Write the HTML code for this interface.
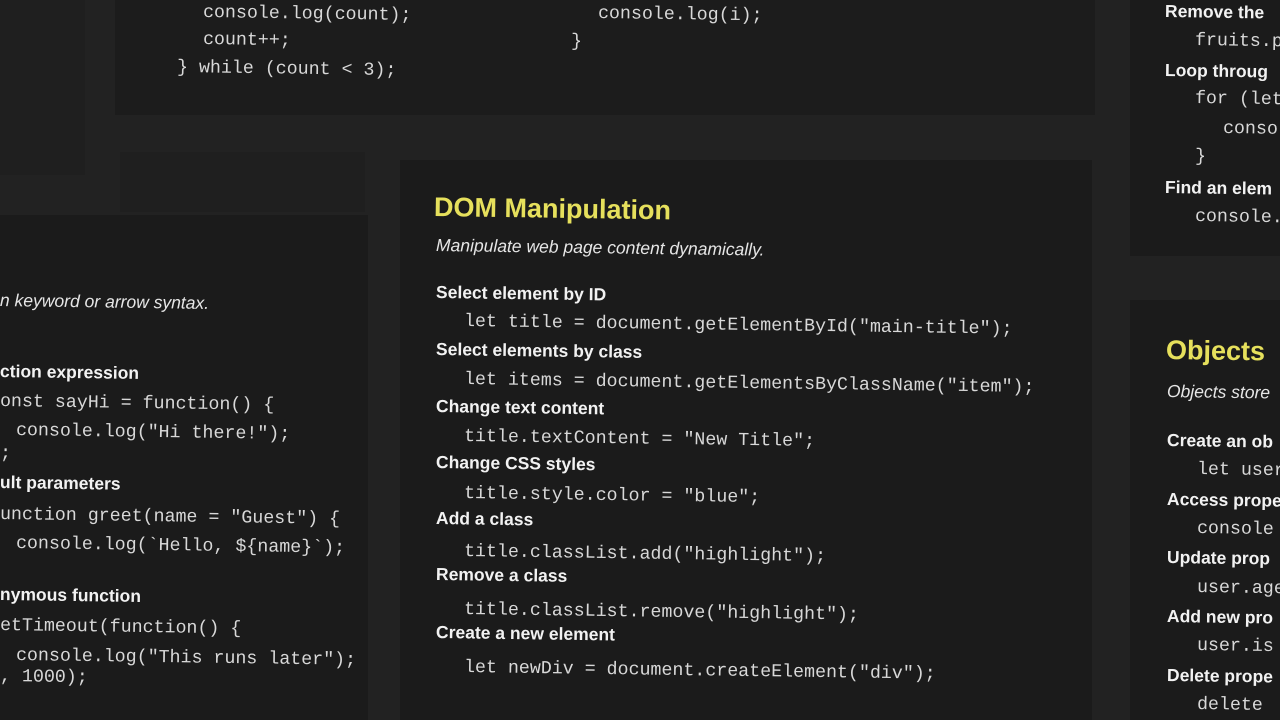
<!DOCTYPE html>
<html><head><meta charset="utf-8"><style>
html,body{margin:0;padding:0;width:1280px;height:720px;overflow:hidden;background:#222222;}
.p{position:absolute;background:#1b1b1b;}
.t{position:absolute;white-space:pre;line-height:1;transform:rotate(0.8deg);transform-origin:0 50%;}
.m{font-family:"Liberation Mono",monospace;font-size:18.3px;color:#d8d8d8;}
.h{font-family:"Liberation Sans",sans-serif;font-weight:bold;font-size:17.5px;color:#f2f2f2;}
.i{font-family:"Liberation Sans",sans-serif;font-style:italic;font-size:17.5px;color:#e6e6e6;}
.y{font-family:"Liberation Sans",sans-serif;font-weight:bold;font-size:27px;color:#e6e05c;}
</style></head><body>
<div class="p" style="left:115px;top:0;width:980px;height:115px;background:#1c1c1c"></div>
<div class="p" style="left:0;top:0;width:85px;height:175px;background:#1f1f1f"></div>
<div class="p" style="left:120px;top:152px;width:245px;height:60px;background:#1f1f1f"></div>
<div class="p" style="left:0;top:215px;width:368px;height:505px"></div>
<div class="p" style="left:400px;top:160px;width:692px;height:560px"></div>
<div class="p" style="left:1130px;top:0;width:150px;height:256px"></div>
<div class="p" style="left:1130px;top:300px;width:150px;height:420px"></div>

<div class="t m" style="left:203px;top:4px">console.log(count);</div>
<div class="t m" style="left:203px;top:31px">count++;</div>
<div class="t m" style="left:177px;top:59px">} while (count &lt; 3);</div>
<div class="t m" style="left:598px;top:5px">console.log(i);</div>
<div class="t m" style="left:571px;top:33px">}</div>

<div class="t i" style="left:0;top:292px">n keyword or arrow syntax.</div>
<div class="t h" style="left:0;top:363px">ction expression</div>
<div class="t m" style="left:0;top:393px">onst sayHi = function() {</div>
<div class="t m" style="left:16px;top:422px">console.log("Hi there!");</div>
<div class="t m" style="left:0;top:445px">;</div>
<div class="t h" style="left:0;top:474px">ult parameters</div>
<div class="t m" style="left:0;top:506px">unction greet(name = "Guest") {</div>
<div class="t m" style="left:16px;top:535px">console.log(`Hello, ${name}`);</div>
<div class="t h" style="left:0;top:586px">nymous function</div>
<div class="t m" style="left:0;top:617px">etTimeout(function() {</div>
<div class="t m" style="left:16px;top:647px">console.log("This runs later");</div>
<div class="t m" style="left:0;top:668px">, 1000);</div>

<div class="t y" style="left:434px;top:194px">DOM Manipulation</div>
<div class="t i" style="left:436px;top:237px">Manipulate web page content dynamically.</div>
<div class="t h" style="left:436px;top:284px">Select element by ID</div>
<div class="t m" style="left:464px;top:313px">let title = document.getElementById("main-title");</div>
<div class="t h" style="left:436px;top:341px">Select elements by class</div>
<div class="t m" style="left:464px;top:371px">let items = document.getElementsByClassName("item");</div>
<div class="t h" style="left:436px;top:398px">Change text content</div>
<div class="t m" style="left:464px;top:428px">title.textContent = "New Title";</div>
<div class="t h" style="left:436px;top:454px">Change CSS styles</div>
<div class="t m" style="left:464px;top:485px">title.style.color = "blue";</div>
<div class="t h" style="left:436px;top:510px">Add a class</div>
<div class="t m" style="left:464px;top:543px">title.classList.add("highlight");</div>
<div class="t h" style="left:436px;top:566px">Remove a class</div>
<div class="t m" style="left:464px;top:601px">title.classList.remove("highlight");</div>
<div class="t h" style="left:436px;top:624px">Create a new element</div>
<div class="t m" style="left:464px;top:659px">let newDiv = document.createElement("div");</div>

<div class="t h" style="left:1165px;top:3px">Remove the</div>
<div class="t m" style="left:1195px;top:32px">fruits.p</div>
<div class="t h" style="left:1165px;top:62px">Loop throug</div>
<div class="t m" style="left:1195px;top:90px">for (let</div>
<div class="t m" style="left:1223px;top:120px">conso</div>
<div class="t m" style="left:1195px;top:148px">}</div>
<div class="t h" style="left:1165px;top:179px">Find an elem</div>
<div class="t m" style="left:1195px;top:208px">console.</div>
<div class="t y" style="left:1166px;top:337px">Objects</div>
<div class="t i" style="left:1167px;top:383px">Objects store</div>
<div class="t h" style="left:1167px;top:432px">Create an ob</div>
<div class="t m" style="left:1197px;top:461px">let user</div>
<div class="t h" style="left:1167px;top:491px">Access prope</div>
<div class="t m" style="left:1197px;top:520px">console</div>
<div class="t h" style="left:1167px;top:549px">Update prop</div>
<div class="t m" style="left:1197px;top:579px">user.age</div>
<div class="t h" style="left:1167px;top:608px">Add new pro</div>
<div class="t m" style="left:1197px;top:637px">user.is</div>
<div class="t h" style="left:1167px;top:667px">Delete prope</div>
<div class="t m" style="left:1197px;top:696px">delete</div>
</body></html>
